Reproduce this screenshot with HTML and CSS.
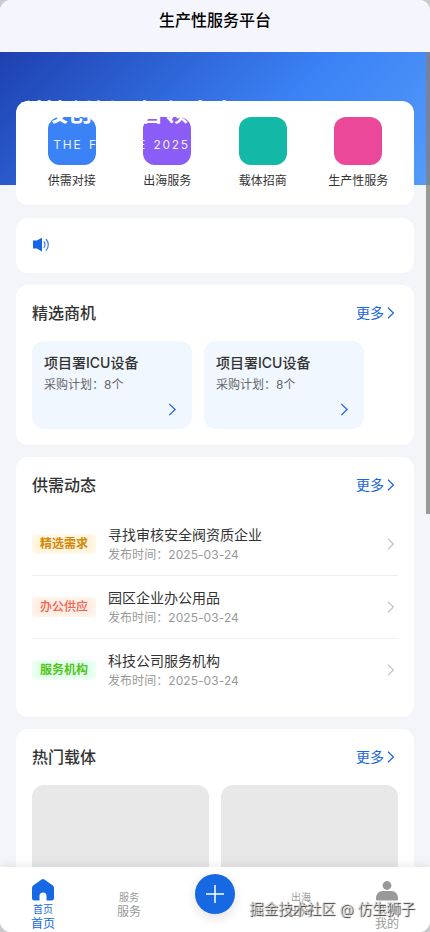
FILE: index.html
```html
<!DOCTYPE html>
<html lang="zh-CN">
<head>
<meta charset="utf-8">
<meta name="viewport" content="width=device-width, initial-scale=1">
<title>生产性服务平台</title>
<link rel="stylesheet" href="styles.css">
</head>
<body>
<svg class="defs" aria-hidden="true"><symbol id="chev" viewBox="0 0 8 12"><path d="M1 .8 6.4 6 1 11.2" fill="none" stroke="currentColor" stroke-width="1.2"/></symbol></svg>
<div class="phone">
  <header class="bar">生产性服务平台</header>
  <main class="page">
    <section class="hero">
      <div class="hero-text">
        <h1>科技创新，智领未来</h1>
        <p>IN THE FUTURE 2025</p>
      </div>
    </section>
    <nav class="card shortcuts">
      <a><i class="tile blue"></i>供需对接</a>
      <a><i class="tile purple"></i>出海服务</a>
      <a><i class="tile teal"></i>载体招商</a>
      <a><i class="tile pink"></i>生产性服务</a>
    </nav>
    <section class="card notice">
      <svg width="18" height="16" viewBox="0 0 18 16"><path d="M1 3.6h3.800L10 .8v13.600l-5.200-2.800H1z" fill="#1565e6"/><path d="M11.800 4.400q2.400 3.200 0 6.500M14 1.800q4.600 5.900 0 11.800" fill="none" stroke="#3e7de8" stroke-width="1.200"/></svg>
    </section>
    <section class="card">
      <div class="head"><h2>精选商机</h2><a>更多<svg><use href="#chev"/></svg></a></div>
      <div class="deals">
        <article><h3>项目署ICU设备</h3><p>采购计划：8个</p><svg><use href="#chev"/></svg></article>
        <article><h3>项目署ICU设备</h3><p>采购计划：8个</p><svg><use href="#chev"/></svg></article>
      </div>
    </section>
    <section class="card feed">
      <div class="head"><h2>供需动态</h2><a>更多<svg><use href="#chev"/></svg></a></div>
      <ul>
        <li><span class="tag amber">精选需求</span><div><h4>寻找审核安全阀资质企业</h4><p>发布时间：2025-03-24</p></div><svg><use href="#chev"/></svg></li>
        <li><span class="tag red">办公供应</span><div><h4>园区企业办公用品</h4><p>发布时间：2025-03-24</p></div><svg><use href="#chev"/></svg></li>
        <li><span class="tag green">服务机构</span><div><h4>科技公司服务机构</h4><p>发布时间：2025-03-24</p></div><svg><use href="#chev"/></svg></li>
      </ul>
    </section>
    <section class="card">
      <div class="head"><h2>热门载体</h2><a>更多<svg><use href="#chev"/></svg></a></div>
      <div class="places"><div></div><div></div></div>
    </section>
  </main>
  <i class="scroll"></i>
  <footer class="tabs">
    <a class="on"><svg width="22" height="22" viewBox="0 0 22 22"><path d="M9.600.500q1.400-.800 2.800 0l8.100 5.800q1.500 1.100 1.500 2.700v10q0 2.500-2.500 2.500H14.500v-4.500a3.500 3.500 0 0 0-7 0v4.500h-5Q0 21.500 0 19V9q0-1.600 1.500-2.700z" fill="currentColor"/></svg><small>首页</small><span>首页</span></a>
    <a class="plain"><small>服务</small><span>服务</span></a>
    <a class="add"><b><svg width="18" height="18" viewBox="0 0 18 18"><path d="M9 0v18M0 9h18" stroke="#fff" stroke-width="1.500"/></svg></b></a>
    <a class="plain"><small>出海</small><span>出海</span></a>
    <a><svg width="22" height="22" viewBox="0 0 22 22"><circle cx="11" cy="6.500" r="4.400" fill="currentColor"/><path d="M0 20.200Q0 12.100 7 12.100h8q7 0 7 8.100 0 1.300-1.300 1.300H1.300Q0 21.500 0 20.200z" fill="currentColor"/></svg><small>我的</small><span>我的</span></a>
  </footer>
  <div class="mark">掘金技术社区 @ 仿生狮子</div>
</div>
</body>
</html>
```
FILE: styles.css
```css
* { box-sizing: border-box; margin: 0; padding: 0; }
body { background: #c9cacc; font-family: Inter, "Noto Sans CJK SC", sans-serif; color: #333; }
.defs { position: absolute; width: 0; height: 0; }
.phone { position: relative; width: 430px; height: 932px; overflow: hidden; border-radius: 11px; background: #f4f5f9; display: flex; flex-direction: column; }
.bar { flex: 0 0 52px; height: 52px; background: #f5f6fd; color: #000; font-size: 16px; font-weight: 500; line-height: 40px; text-align: center; }
.page { flex: 1; min-height: 0; overflow: hidden; display: flex; flex-direction: column; gap: 12px; }
.page > * { flex-shrink: 0; }
.hero { position: relative; height: 133px; background: linear-gradient(135deg, #1e40af 0%, #3b82f6 60%, #559bf8 100%); }
.hero-text { position: absolute; z-index: 2; left: 20px; top: 43px; color: #fff; white-space: nowrap; }
.hero-text h1 { font-size: 24px; line-height: 36px; font-weight: 700; }
.hero-text p { font-size: 12px; line-height: 18px; letter-spacing: 1.7px; word-spacing: 1.6px; margin-top: 5px; padding-left: 11px; opacity: .9; }
.card { position: relative; margin: 0 16px; padding: 16px; border-radius: 12px; background: #fff; }
.shortcuts { margin-top: -96px; height: 104px; padding: 16px 8px; display: grid; grid-template-columns: repeat(4, 1fr); }
.shortcuts a { display: flex; flex-direction: column; align-items: center; gap: 7px; font-size: 12px; line-height: 18px; color: #333; }
.tile { width: 48px; height: 48px; border-radius: 12px; }
.blue { background: #3b82f6; }
.purple { background: #8b5cf6; }
.teal { background: #14b8a6; }
.pink { background: #ec4899; }
.notice { height: 55px; margin-top: 1px; padding: 19px 16px; }
.head { display: flex; justify-content: space-between; align-items: center; height: 24px; margin-bottom: 16px; }
.head h2 { font-size: 16px; font-weight: 500; line-height: 24px; }
.head a { display: flex; align-items: center; gap: 3px; padding-right: 3px; font-size: 14px; line-height: 20px; color: #1a66dc; }
.head svg { width: 8px; height: 12px; }
.deals { display: flex; gap: 12px; }
.deals article { display: flex; flex-direction: column; width: 160px; height: 88px; padding: 11px 12px 12px; border-radius: 12px; background: #f0f7ff; }
.deals h3 { font-size: 14px; line-height: 21px; font-weight: 500; }
.deals p { font-size: 12px; line-height: 18px; color: #666; margin-top: 3px; }
.deals svg { width: 9px; height: 13px; margin: 9px 3px 0 auto; color: #2563eb; }
.feed { height: 260px; }
.feed ul { list-style: none; margin-top: 15px; }
.feed li { display: flex; align-items: center; height: 63px; gap: 12px; border-bottom: 1px solid #eee; }
.feed li:last-child { border-color: transparent; }
.feed li div { flex: 1; }
.feed h4 { font-size: 14px; line-height: 20px; font-weight: 400; margin-top: 1px; }
.feed li p { font-size: 12px; line-height: 18px; letter-spacing: .06px; margin-top: 1px; color: #999; }
.feed li svg { width: 8px; height: 12px; margin-right: 3px; color: #c4c4c4; }
.tag { width: 64px; height: 20px; border-radius: 4px; font-size: 12px; line-height: 20px; font-weight: 600; text-align: center; }
.amber { background: #fff3dc; box-shadow: inset 0 0 6px #fffdf8; color: #d48806; }
.red { background: #ffeee3; box-shadow: inset 0 0 6px #fffaf6; color: #f5604d; font-weight: 500; }
.green { background: #e2ffec; box-shadow: inset 0 0 6px #f7fffa; color: #52c41a; }
.places { display: grid; grid-template-columns: 1fr 1fr; gap: 12px; }
.places div { height: 120px; border-radius: 12px; background: #e8e8e8; }
.scroll { position: absolute; z-index: 3; right: 0; top: 52px; width: 4px; height: 462px; background: rgba(128, 128, 128, .78); }
.tabs { position: relative; z-index: 4; flex: 0 0 65px; display: grid; grid-template-columns: repeat(5, 1fr); background: #fff; box-shadow: 0 -2px 10px rgba(0, 0, 0, .08); }
.tabs a { display: flex; flex-direction: column; align-items: center; padding-top: 12px; color: #999; }
.tabs .on { color: #1668e3; }
.tabs small { font-size: 10px; line-height: 14px; margin-top: 1px; }
.tabs span { font-size: 12px; line-height: 14px; margin-top: 1px; }
.tabs .plain { padding-top: 22px; }
.tabs .add { padding-top: 7px; }
.add b { display: flex; align-items: center; justify-content: center; width: 40px; height: 40px; border-radius: 50%; background: #1668e3; box-shadow: 0 4px 12px rgba(0, 0, 0, .12); }
.mark { position: absolute; z-index: 5; right: 15px; bottom: 12px; font-size: 14.4px; line-height: 22px; color: rgba(225, 225, 225, .75); text-shadow: 1px 1px 1px #333; white-space: nowrap; }
```
